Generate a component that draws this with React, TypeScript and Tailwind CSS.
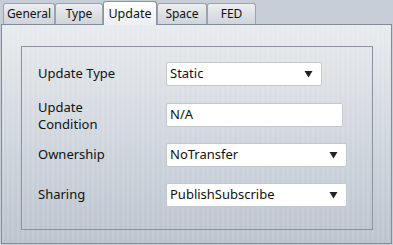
import React from "react";

// ─── Constants ───────────────────────────────────────────────────────

const TABS = [
  { label: "General", w: "w-[52px]" },
  { label: "Type", w: "w-[48px]" },
  { label: "Update", w: "w-[54px]", active: true },
  { label: "Space", w: "w-[50px]" },
  { label: "FED", w: "w-[49px]" },
];

const font = "font-['Noto_Sans','Open_Sans',sans-serif]";
const fieldClass =
  "flex h-[24px] items-center rounded-[2px] border border-[#c3c8cf] bg-white pl-[3px] pr-[8px] text-[13px] text-[#111]";

// ─── Pieces ──────────────────────────────────────────────────────────

function Arrow() {
  return (
    <svg width="9" height="8" viewBox="0 0 9 8" className="ml-auto">
      <path d="M0.5 1 H8.5 L4.5 7.5 Z" fill="#222" />
    </svg>
  );
}

function Combo({ value, w }: { value: string; w: string }) {
  return (
    <div className={`${fieldClass} ${w}`}>
      <span>{value}</span>
      <Arrow />
    </div>
  );
}

// ─── Component ───────────────────────────────────────────────────────

export default function App() {
  return (
    <div className={`h-[245px] w-[393px] overflow-hidden bg-[#c6cdd6] ${font}`}>
      {/* Tab strip */}
      <div className="flex h-[24px] items-end pl-[3px]">
        {TABS.map((t) =>
          t.active ? (
            <div
              key={t.label}
              className={`relative z-10 -mb-px flex h-[24px] ${t.w} items-start justify-center rounded-t-[3px] border border-b-0 border-[#8b949e] bg-gradient-to-b from-[#ffffff] to-[#eceef1] pt-[3px] text-[12.5px] text-[#111]`}
            >
              {t.label}
            </div>
          ) : (
            <div
              key={t.label}
              className={`flex h-[21px] ${t.w} items-center justify-center rounded-t-[3px] border border-b-0 border-[#9ba3ad] bg-gradient-to-b from-[#eceef1] to-[#cfd4da] text-[12px] text-[#111]`}
            >
              {t.label}
            </div>
          )
        )}
      </div>

      {/* Panel */}
      <div className="mx-[1px] h-[220px] border border-[#838c97] [background-image:repeating-linear-gradient(90deg,rgba(255,255,255,0.10)_0_2px,transparent_2px_5px),linear-gradient(to_bottom,#e8ebee,#bbc3ce)] pl-[19px] pt-[21px]">
        {/* Group box */}
        <div className="h-[184px] w-[352px] border border-[#8a939d] pl-[16px] pt-[15px] text-[13px] text-[#111]">
          <div className="flex h-[23px] items-center">
            <div className="w-[128px]">Update Type</div>
            <Combo value="Static" w="w-[156px]" />
          </div>
          <div className="mt-[18px] flex h-[24px] items-center">
            <div className="w-[128px] pt-[2px] leading-[17px]">
              Update
              <br />
              Condition
            </div>
            <div className={`${fieldClass} w-[177px]`}>N/A</div>
          </div>
          <div className="mt-[16px] flex h-[24px] items-center">
            <div className="w-[128px]">Ownership</div>
            <Combo value="NoTransfer" w="w-[181px]" />
          </div>
          <div className="mt-[16px] flex h-[24px] items-center">
            <div className="w-[128px]">Sharing</div>
            <Combo value="PublishSubscribe" w="w-[181px]" />
          </div>
        </div>
      </div>
    </div>
  );
}
